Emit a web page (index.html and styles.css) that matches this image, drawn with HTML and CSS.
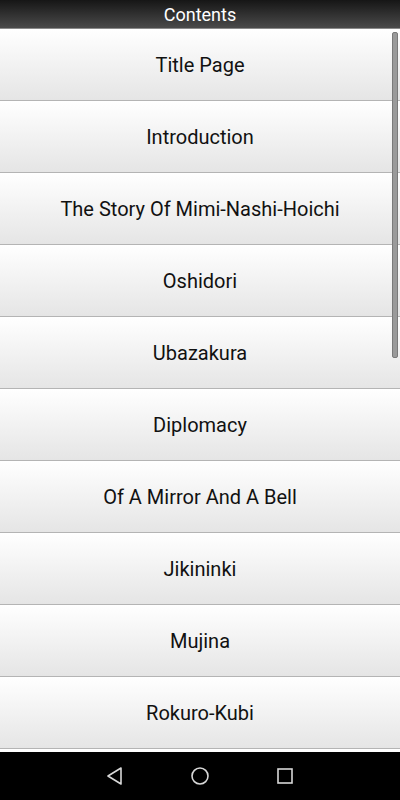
FILE: index.html
```html
<!DOCTYPE html>
<html>

<head>
    <title>Contents</title>
    <meta charset="utf-8">
    <link rel="stylesheet" href="styles.css">
</head>

<body>
    <div class="cabecera">Contents</div>
    <div class="lista">
        <div class="capitulos">
            <div class="capitulo">Title Page</div>
            <div class="capitulo">Introduction</div>
            <div class="capitulo">The Story Of Mimi-Nashi-Hoichi</div>
            <div class="capitulo">Oshidori</div>
            <div class="capitulo">Ubazakura</div>
            <div class="capitulo">Diplomacy</div>
            <div class="capitulo">Of A Mirror And A Bell</div>
            <div class="capitulo">Jikininki</div>
            <div class="capitulo">Mujina</div>
            <div class="capitulo">Rokuro-Kubi</div>
            <div class="capitulo"></div>
        </div>
        <div class="barra"></div>
    </div>
    <div class="navegacion">
        <svg width="20" height="20" viewBox="0 0 20 20"><path d="M16 2 L3 10 L16 18 Z" fill="none" stroke="#d8d8d8" stroke-width="1.6" stroke-linejoin="round"/></svg>
        <svg width="20" height="20" viewBox="0 0 20 20"><circle cx="10" cy="10" r="8" fill="none" stroke="#d8d8d8" stroke-width="1.6"/></svg>
        <svg width="20" height="20" viewBox="0 0 20 20"><rect x="3" y="3" width="14" height="14" fill="none" stroke="#d8d8d8" stroke-width="1.6"/></svg>
    </div>
</body>

</html>
```

FILE: styles.css
```css
body {
    margin: 0;
    font-family: Roboto, sans-serif;
    height: 800px;
    display: flex;
    flex-direction: column;
    overflow: hidden;
}

.cabecera {
    height: 28px;
    line-height: 30px;
    background: linear-gradient(#161616, #4a4a4a);
    border-bottom: 1px solid #8a8a8a;
    color: #fff;
    text-align: center;
    font-size: 18px;
}

.lista {
    flex: 1;
    position: relative;
    overflow: hidden;
}

.capitulo {
    height: 70px;
    padding-top: 1px;
    line-height: 71px;
    border-bottom: 1px solid #b4b4b4;
    background: linear-gradient(#ffffff, #e5e5e5);
    text-align: center;
    font-size: 20px;
    color: #111;
}

.barra {
    position: absolute;
    right: 2px;
    top: 3px;
    width: 4px;
    height: 324px;
    background: #9a9a9a;
    border: 1px solid #7a7a7a;
    border-radius: 2px;
}

.navegacion {
    height: 48px;
    flex-shrink: 0;
    background: #000;
    display: flex;
    justify-content: center;
    align-items: center;
    gap: 65px;
}
```
